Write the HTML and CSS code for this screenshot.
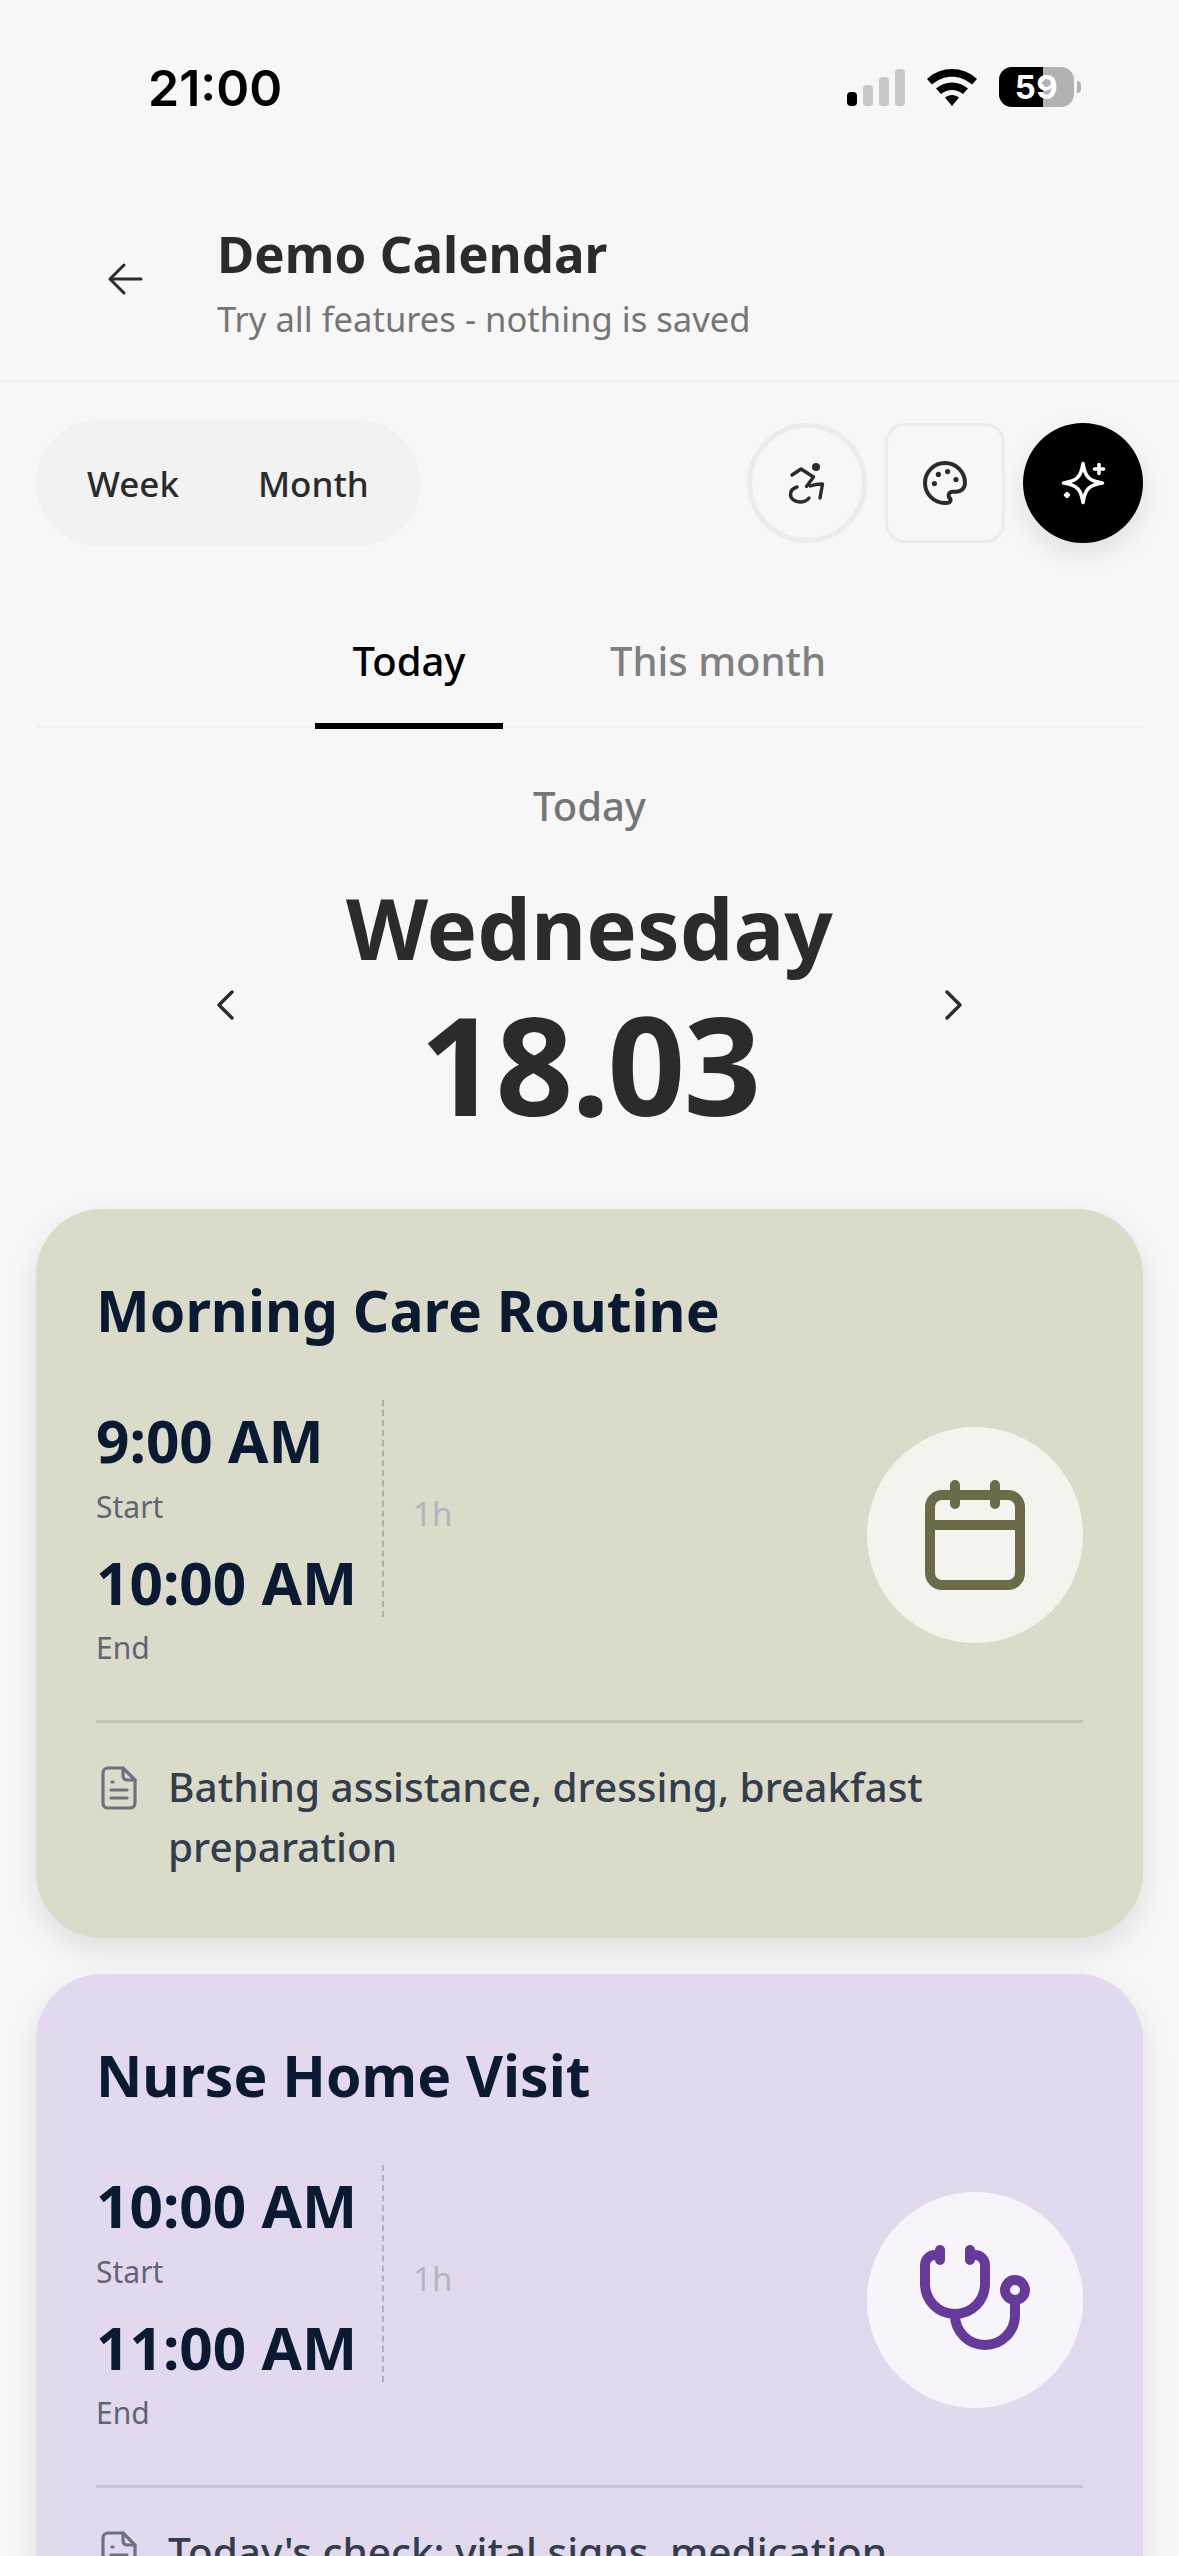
FILE: index.html
```html
<!DOCTYPE html>
<html lang="en">
<head>
  <meta charset="UTF-8" />
  <title>Demo Calendar</title>
  <link rel="stylesheet" href="styles.css">
</head>
<body>
  <div class="screen">

    <div class="status-bar">
      <span class="clock">21:00</span>
      <div class="status-icons">
        <svg class="signal" width="58" height="37" viewBox="0 0 58 37">
          <rect x="0" y="23" width="10" height="14" rx="4" fill="#000"/>
          <rect x="16" y="16" width="10" height="21" rx="3.5" fill="#c8c8c8"/>
          <rect x="32" y="8" width="10" height="29" rx="3.5" fill="#c8c8c8"/>
          <rect x="48" y="0" width="10" height="37" rx="3.5" fill="#c8c8c8"/>
        </svg>
        <svg class="wifi" width="50" height="37" viewBox="0 0 50 37">
          <path d="M0 10 C14 -3.300 36 -3.300 50 10 L45 15.500 C33 5 17 5 5 15.500 Z" fill="#000"/>
          <path d="M9 19.500 C18 11.500 32 11.500 41 19.500 L36 25 C29 19.500 21 19.500 14 25 Z" fill="#000"/>
          <path d="M18 28.500 C22 25 28 25 32 28.500 L25 37 Z" fill="#000"/>
        </svg>
        <div class="battery">
          <div class="battery-body">
            <div class="battery-fill"></div>
            <span class="battery-num">59</span>
          </div>
          <div class="battery-tip"></div>
        </div>
      </div>
    </div>

    <header class="top-header">
      <button class="back-btn">
        <svg width="50" height="50" viewBox="0 0 50 50" fill="none" stroke="#2b2b2b" stroke-width="3" stroke-linecap="round" stroke-linejoin="round">
          <path d="M40 25H10"/><path d="M23 11L9 25l14 14"/>
        </svg>
      </button>
      <div class="header-text">
        <h1>Demo Calendar</h1>
        <p>Try all features - nothing is saved</p>
      </div>
    </header>

    <div class="toolbar">
      <div class="view-switch">
        <span>Week</span>
        <span>Month</span>
      </div>
      <div class="tool-buttons">
        <button class="tool-btn round">
          <svg width="60" height="60" viewBox="0 0 60 60" fill="none" stroke="#2b2b2b" stroke-width="3.400" stroke-linecap="round" stroke-linejoin="round">
            <circle cx="39" cy="14" r="4" fill="#2b2b2b" stroke="none"/>
            <path d="M15 22l9-6 12.500 8-7 9.500"/>
            <path d="M33 33c4-1.500 8-2 12.500-2l-2.500 14"/>
            <path d="M20 34c-5 1.500-6.500 5-6.500 7.500 0 4.500 4.500 7.500 9.500 7.500 4 0 7.500-2 9-4"/>
          </svg>
        </button>
        <button class="tool-btn square">
          <svg width="48" height="48" viewBox="0 0 24 24" fill="none" stroke="#2b2b2b" stroke-width="2" stroke-linecap="round" stroke-linejoin="round">
            <path d="M12 22a10 10 0 1 1 10-10c0 2.800-2.200 4.400-4.400 4.400h-2c-1 0-1.800.8-1.800 1.800 0 .5.2.9.5 1.200.3.4.5.8.5 1.200 0 .8-.9 1.400-2.800 1.400z"/>
            <circle cx="6.700" cy="12.300" r="1.300" fill="#2b2b2b" stroke="none"/>
            <circle cx="8.700" cy="7.700" r="1.300" fill="#2b2b2b" stroke="none"/>
            <circle cx="13.300" cy="6.300" r="1.300" fill="#2b2b2b" stroke="none"/>
            <circle cx="17.500" cy="10.300" r="1.300" fill="#2b2b2b" stroke="none"/>
          </svg>
        </button>
        <button class="tool-btn magic">
          <svg width="60" height="60" viewBox="0 0 60 60" fill="none" stroke="#fff" stroke-width="3.600" stroke-linecap="round" stroke-linejoin="round">
            <path d="M30 10.500C32 24 36 28 49.500 30 36 32 32 36 30 49.500 28 36 24 32 10.500 30 24 28 28 24 30 10.500z"/>
            <path d="M46 11.500v9M41.500 16h9"/>
            <path d="M14 40.500v3M12.500 42h3"/>
          </svg>
        </button>
      </div>
    </div>

    <nav class="tabs">
      <div class="tab active">Today</div>
      <div class="tab">This month</div>
    </nav>

    <section class="date-block">
      <div class="date-label">Today</div>
      <div class="date-row">
        <button class="arrow">
          <svg width="48" height="48" viewBox="0 0 24 24" fill="none" stroke="#2b2b2b" stroke-width="1.700" stroke-linecap="round" stroke-linejoin="round"><path d="M15.500 5.500L9 12l6.500 6.500"/></svg>
        </button>
        <div class="date-main">
          <div class="weekday">Wednesday</div>
          <div class="day-num">18.03</div>
        </div>
        <button class="arrow">
          <svg width="48" height="48" viewBox="0 0 24 24" fill="none" stroke="#2b2b2b" stroke-width="1.700" stroke-linecap="round" stroke-linejoin="round"><path d="M8.500 5.500L15 12l-6.500 6.500"/></svg>
        </button>
      </div>
    </section>

    <article class="event-card olive">
      <h2>Morning Care Routine</h2>
      <div class="event-middle">
        <div class="times">
          <div class="time-col">
            <div class="time">9:00 AM</div>
            <div class="time-label">Start</div>
            <div class="time">10:00 AM</div>
            <div class="time-label">End</div>
          </div>
          <div class="duration">1h</div>
        </div>
        <div class="event-icon">
          <svg width="120" height="120" viewBox="0 0 120 120" fill="none" stroke="#6b6b47" stroke-width="10" stroke-linecap="round" stroke-linejoin="round">
            <rect x="15" y="20" width="90" height="90" rx="12"/>
            <path d="M40 10v19M80 10v19"/>
            <path d="M15 50h90" stroke-linecap="butt"/>
          </svg>
        </div>
      </div>
      <div class="note">
        <svg width="36" height="44" viewBox="0 0 36 44" fill="none" stroke="#6d707e" stroke-width="3.200" stroke-linecap="round" stroke-linejoin="round">
          <path d="M22 2H7a5 5 0 0 0-5 5v30a5 5 0 0 0 5 5h22a5 5 0 0 0 5-5V14z"/>
          <path d="M22 2v8a4 4 0 0 0 4 4h8"/>
          <path d="M11 16h1M10 24h16M10 32h16"/>
        </svg>
        <p>Bathing assistance, dressing, breakfast preparation</p>
      </div>
    </article>

    <article class="event-card lilac">
      <h2>Nurse Home Visit</h2>
      <div class="event-middle">
        <div class="times">
          <div class="time-col">
            <div class="time">10:00 AM</div>
            <div class="time-label">Start</div>
            <div class="time">11:00 AM</div>
            <div class="time-label">End</div>
          </div>
          <div class="duration">1h</div>
        </div>
        <div class="event-icon">
          <svg width="120" height="120" viewBox="0 0 120 120" fill="none" stroke="#663a9a" stroke-width="10" stroke-linecap="round" stroke-linejoin="round">
            <path d="M25 15h-5a10 10 0 0 0-10 10v19a30 30 0 0 0 60 0V25a10 10 0 0 0-10-10h-5"/>
            <path d="M25 10v10M55 10v10"/>
            <path d="M40 75a30 30 0 0 0 60 0V60"/>
            <circle cx="100" cy="50" r="10"/>
          </svg>
        </div>
      </div>
      <div class="note">
        <svg width="36" height="44" viewBox="0 0 36 44" fill="none" stroke="#6d707e" stroke-width="3.200" stroke-linecap="round" stroke-linejoin="round">
          <path d="M22 2H7a5 5 0 0 0-5 5v30a5 5 0 0 0 5 5h22a5 5 0 0 0 5-5V14z"/>
          <path d="M22 2v8a4 4 0 0 0 4 4h8"/>
          <path d="M11 16h1M10 24h16M10 32h16"/>
        </svg>
        <p>Today's check: vital signs, medication</p>
      </div>
    </article>

  </div>
</body>
</html>
```

FILE: styles.css
```css
* {
  box-sizing: border-box;
}

html, body {
  margin: 0;
  padding: 0;
  height: 2556px;
  overflow: hidden;
  background: #f7f7f7;
}

body {
  font-family: "Noto Sans", "Open Sans", sans-serif;
  color: #2b2b2b;
}

button {
  border: none;
  background: none;
  padding: 0;
  display: flex;
  align-items: center;
  justify-content: center;
}

.screen {
  width: 1179px;
  height: 2556px;
  overflow: hidden;
}

/* Status bar */
.status-bar {
  height: 176px;
  padding: 60px 98px 0 148px;
  display: flex;
  justify-content: space-between;
  align-items: flex-start;
}

.clock {
  font-family: "Inter", sans-serif;
  font-size: 50px;
  line-height: 56px;
  font-weight: 600;
  color: #000;
}

.status-icons {
  display: flex;
  align-items: center;
  gap: 22px;
  margin-top: 7px;
}

.battery {
  display: flex;
  align-items: center;
  gap: 3px;
}

.battery-body {
  position: relative;
  width: 75px;
  height: 40px;
  border-radius: 13px;
  background: #b2b2b2;
  overflow: hidden;
  display: flex;
  align-items: center;
  justify-content: center;
}

.battery-fill {
  position: absolute;
  left: 0;
  top: 0;
  bottom: 0;
  width: 59%;
  background: #000;
}

.battery-num {
  position: relative;
  font-family: "Inter", sans-serif;
  font-size: 33px;
  font-weight: 700;
  color: #fff;
  letter-spacing: 0.5px;
}

.battery-tip {
  width: 4px;
  height: 12px;
  background: #b2b2b2;
  border-radius: 0 4px 4px 0;
}

/* Header */
.top-header {
  height: 206px;
  display: flex;
  align-items: flex-start;
  padding: 45px 0 0 101px;
  gap: 66px;
  border-bottom: 2px solid #f1f1f1;
}

.back-btn {
  width: 50px;
  height: 50px;
  margin-top: 33px;
}

.header-text h1 {
  margin: 0;
  font-size: 51px;
  line-height: 64px;
  font-weight: 700;
  color: #2b2b2b;
}

.header-text p {
  margin: 10px 0 0;
  font-size: 34.600px;
  line-height: 48px;
  color: #757575;
}

/* Toolbar */
.toolbar {
  display: flex;
  justify-content: space-between;
  align-items: center;
  padding: 38px 36px 0;
}

.view-switch {
  width: 385px;
  height: 126px;
  border-radius: 63px;
  background: #f2f2f2;
  display: flex;
  align-items: center;
  padding-left: 51px;
  gap: 79px;
  font-size: 35px;
  font-weight: 500;
  color: #2b2b2b;
}

.tool-buttons {
  display: flex;
  align-items: center;
  gap: 18px;
}

.tool-btn {
  width: 120px;
  height: 120px;
  background: #f7f7f7;
  border: 5px solid #ececec;
}

.tool-btn.round {
  border-radius: 50%;
}

.tool-btn.square {
  border-radius: 20px;
  border-width: 3px;
}

.tool-btn.magic {
  border: none;
  border-radius: 50%;
  background: #000;
  box-shadow: 0 10px 24px rgba(0, 0, 0, 0.1);
}

/* Tabs */
.tabs {
  margin: 55px 36px 0;
  height: 127px;
  display: flex;
  align-items: flex-start;
  padding-left: 279px;
  border-bottom: 2px solid #f1f1f1;
}

.tab {
  width: 188px;
  height: 128px;
  flex-shrink: 0;
  display: flex;
  align-items: center;
  justify-content: center;
  font-size: 40px;
  font-weight: 500;
  color: #808080;
  padding-bottom: 4px;
  border-bottom: 6px solid transparent;
}

.tab + .tab {
  width: auto;
  margin-left: 107px;
}

.tab.active {
  color: #000;
  border-bottom-color: #000;
}

/* Date */
.date-block {
  text-align: center;
  padding-top: 53px;
}

.date-label {
  font-size: 40px;
  line-height: 50px;
  font-weight: 500;
  color: #757575;
}

.date-row {
  display: flex;
  align-items: center;
  justify-content: space-between;
  padding: 0 201px;
  margin-top: 32px;
}

.arrow {
  width: 48px;
  height: 48px;
  margin-top: 10px;
}

.weekday {
  font-size: 85px;
  line-height: 128px;
  font-weight: 700;
  color: #2b2b2b;
}

.day-num {
  font-size: 136px;
  line-height: 146px;
  font-weight: 700;
  letter-spacing: -2px;
  color: #2b2b2b;
}

/* Event cards */
.event-card {
  margin: 0 36px 36px;
  padding: 66px 60px 0;
  border-radius: 66px;
  box-shadow: 0 12px 30px rgba(0, 0, 0, 0.1);
  color: #0a1a33;
}

.date-block + .event-card {
  margin-top: 72px;
}

.olive {
  background: #dbdbca;
}

.lilac {
  background: #e3d9ef;
}

.event-card h2 {
  margin: 0;
  font-size: 57px;
  line-height: 70px;
  font-weight: 700;
}

.event-middle {
  display: flex;
  justify-content: space-between;
  align-items: center;
  margin-top: 57px;
  padding-bottom: 52px;
  border-bottom: 3px solid rgba(0, 0, 0, 0.1);
}

.times {
  display: flex;
  align-items: center;
}

.time-col {
  width: 288px;
  position: relative;
}

.time-col::after {
  content: "";
  position: absolute;
  right: 0;
  top: -2px;
  height: 217px;
  border-right: 2px dashed rgba(0, 0, 0, 0.2);
}

.time {
  font-size: 58.500px;
  line-height: 76px;
  font-weight: 700;
  white-space: nowrap;
}

.time-label {
  font-size: 30px;
  line-height: 40px;
  color: #5f6673;
  margin: 9px 0 17px;
}

.time-label:last-child {
  margin: 8px 0 0;
}

.duration {
  font-size: 33px;
  font-weight: 400;
  color: #b2b5bf;
  margin-left: 29px;
  margin-bottom: 44px;
}

.event-icon {
  width: 216px;
  height: 216px;
  border-radius: 50%;
  background: rgba(255, 255, 255, 0.7);
  display: flex;
  align-items: center;
  justify-content: center;
}

.note {
  display: flex;
  align-items: flex-start;
  gap: 31px;
  padding: 34px 0 61px 5px;
}

.note svg {
  flex-shrink: 0;
  margin-top: 9px;
}

.note p {
  margin: 0;
  font-size: 40.500px;
  line-height: 60px;
  font-weight: 500;
  color: #333d4d;
}
```
